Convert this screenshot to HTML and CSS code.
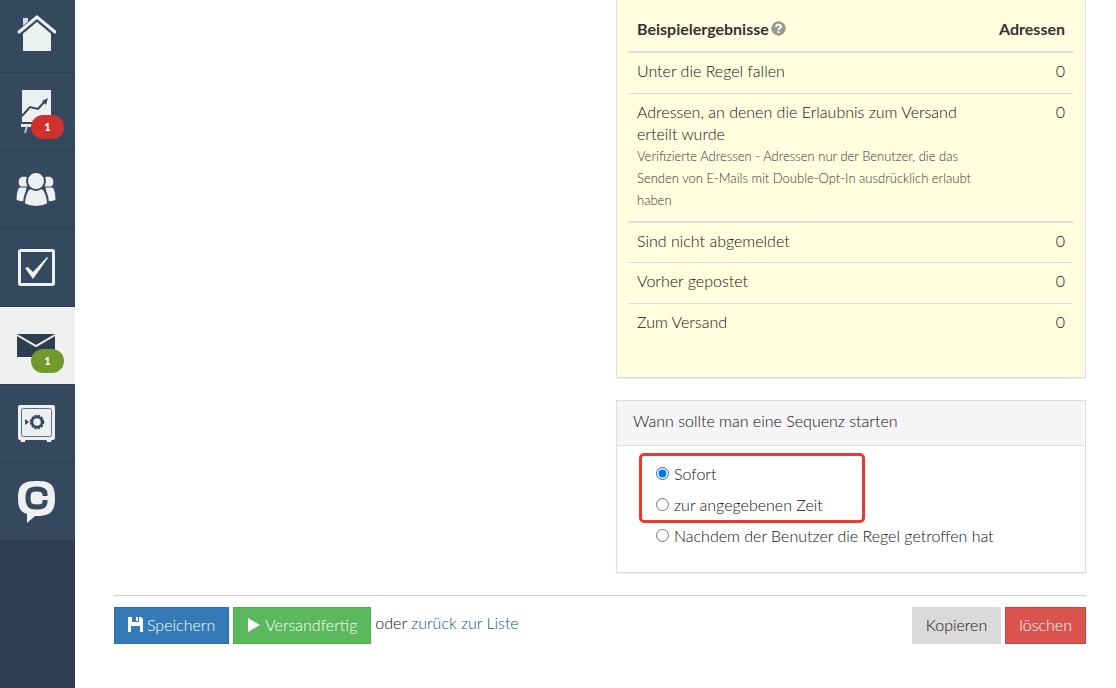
FILE: index.html
```html
<!DOCTYPE html>
<html lang="de">

<head>
    <meta charset="UTF-8">
    <meta name="viewport" content="width=device-width, initial-scale=1.0">
    <title>Sequenz</title>
    <link rel="stylesheet" href="styles.css">
</head>

<body>
    <nav class="sidebar">
        <a href="#" class="nav-item first" aria-label="Start">
            <svg width="40" height="40" viewBox="0 0 40 40">
                <path d="M7 4h5v6l-5 4z" fill="#d3d9dd" />
                <path d="M7 18L21 6l14 12v19H7z" fill="#ecf0f1" />
                <path d="M2 20L21 4l19 16" fill="none" stroke="#34495e" stroke-width="6" />
                <path d="M3 18L21 3l18 15" fill="none" stroke="#ecf0f1" stroke-width="3" stroke-linecap="round" />
            </svg>
        </a>
        <a href="#" class="nav-item" aria-label="Statistik">
            <svg width="40" height="44" viewBox="0 0 40 44">
                <path d="M6 1h29v32H6z" fill="#ecf0f1" />
                <path d="M6 27l8-9 8 2 7-8" fill="none" stroke="#34495e" stroke-width="2" />
                <path d="M26 12l6-3-2 7z" fill="#34495e" />
                <path d="M5 35h30v3H5z" fill="#ecf0f1" />
                <path d="M11 37l-2 7M29 37l2 7" stroke="#b9c2c9" stroke-width="2" />
            </svg>
            <span class="badge red">1</span>
        </a>
        <a href="#" class="nav-item" aria-label="Kontakte">
            <svg width="40" height="40" viewBox="0 0 40 40">
                <g fill="#ecf0f1" stroke="#34495e">
                    <circle cx="8" cy="13" r="6" />
                    <circle cx="32" cy="13" r="6" />
                    <path d="M0 31c0-6 1-10 3-13h8l-2 15c-4 0-7-1-9-2zM40 31c0-6-1-10-3-13h-8l2 15c4 0 7-1 9-2z" />
                    <path d="M8 35c0-8 3-14 6-16h12c3 2 6 8 6 16-7 4-17 4-24 0z" stroke-width="2" />
                    <circle cx="20" cy="12" r="9" stroke-width="2" />
                </g>
            </svg>
        </a>
        <a href="#" class="nav-item" aria-label="Aufgaben">
            <svg width="40" height="40" viewBox="0 0 40 40">
                <rect x="3.5" y="3.5" width="34" height="34" rx="1" fill="none" stroke="#ecf0f1" stroke-width="3" />
                <path d="M9 21l3-1 5 5 14-15 1 1-15 21z" fill="#ecf0f1" />
            </svg>
        </a>
        <a href="#" class="nav-item active" aria-label="Mailings">
            <svg width="40" height="40" viewBox="0 0 40 40">
                <path d="M1 9h38v23H1z" fill="#2c3e50" />
                <path d="M1 10l19 11 19-11" fill="none" stroke="#f0f0f0" stroke-width="2" />
            </svg>
            <span class="badge green">1</span>
        </a>
        <a href="#" class="nav-item" aria-label="Tresor">
            <svg width="40" height="40" viewBox="0 0 40 40">
                <path d="M4 35h6l-1 4H5zM30 35h6l-1 4h-4z" fill="#fff" />
                <rect x="2" y="2" width="37" height="35" rx="2" fill="#ecf0f1" />
                <rect x="5.5" y="5.5" width="30" height="28" rx="2" fill="none" stroke="#5d6f80" />
                <circle cx="21" cy="19" r="5" fill="none" stroke="#34495e" stroke-width="2.5" />
                <circle cx="21" cy="19" r="6.5" fill="none" stroke="#34495e" stroke-width="1.5" stroke-dasharray="2.4 1" />
                <path d="M9 16l4 3-4 3z" fill="#34495e" />
            </svg>
        </a>
        <a href="#" class="nav-item last" aria-label="Chat">
            <svg width="40" height="44" viewBox="0 0 40 44">
                <path d="M21 2c13 0 18 3 18 17S34 37 21 37h-2l-8 7v-9C4 33 2 28 2 19 2 5 8 2 21 2z" fill="#f0f0f0" />
                <path d="M29 17v-2c0-4-3-5-8-5-7 0-9 2-9 9s2 9 9 9c5 0 8-1 8-5v-2" fill="none" stroke="#34495e" stroke-width="5" />
            </svg>
        </a>
    </nav>

    <main class="content">
        <div class="columns">
            <div class="side-col">
                <section class="results">
                    <table>
                        <thead>
                            <tr>
                                <th>Beispielergebnisse
                                    <svg class="help" width="15" height="15" viewBox="0 0 15 15">
                                        <circle cx="7.5" cy="7.5" r="7.2" fill="#999" />
                                        <path d="M5 6c0-3 5-3 5-.3 0 1.6-2.5 1.5-2.5 3.3" fill="none" stroke="#ffffe0" stroke-width="2" />
                                        <path d="M6.5 10h2v2h-2z" fill="#ffffe0" />
                                    </svg>
                                </th>
                                <th class="num">Adressen</th>
                            </tr>
                        </thead>
                        <tbody>
                            <tr class="group">
                                <td>Unter die Regel fallen</td>
                                <td class="num">0</td>
                            </tr>
                            <tr>
                                <td>Adressen, an denen die Erlaubnis zum Versand erteilt wurde
                                    <small>Verifizierte Adressen - Adressen nur der Benutzer, die das Senden von E-Mails mit Double-Opt-In ausdrücklich erlaubt haben</small>
                                </td>
                                <td class="num">0</td>
                            </tr>
                            <tr class="group">
                                <td>Sind nicht abgemeldet</td>
                                <td class="num">0</td>
                            </tr>
                            <tr>
                                <td>Vorher gepostet</td>
                                <td class="num">0</td>
                            </tr>
                            <tr>
                                <td>Zum Versand</td>
                                <td class="num">0</td>
                            </tr>
                        </tbody>
                    </table>
                </section>

                <section class="panel">
                    <h2>Wann sollte man eine Sequenz starten</h2>
                    <div class="panel-body">
                        <div class="highlight"></div>
                        <label><input type="radio" name="start" checked>Sofort</label>
                        <label><input type="radio" name="start">zur angegebenen Zeit</label>
                        <label><input type="radio" name="start">Nachdem der Benutzer die Regel getroffen hat</label>
                    </div>
                </section>
            </div>
        </div>

        <div class="actions">
            <button class="btn save">
                <svg width="15" height="15" viewBox="0 0 15 15">
                    <path d="M0 0h4v5h7V0h2l2 2v13h-3V9H3v6H0zM8 0h2v4H8z" fill="#fff" />
                </svg>
                Speichern
            </button>
            <button class="btn ready">
                <svg width="14" height="14" viewBox="0 0 14 14">
                    <path d="M1 0l12 7-12 7z" fill="#fff" />
                </svg>
                Versandfertig
            </button>
            <span class="back">oder <a href="#">zurück zur Liste</a></span>
            <button class="btn copy">Kopieren</button>
            <button class="btn delete">löschen</button>
        </div>
    </main>
</body>

</html>
```

FILE: styles.css
```css
* {
    box-sizing: border-box;
}

body {
    display: flex;
    min-height: 100vh;
    margin: 0;
    font-family: Lato, "Liberation Sans", sans-serif;
    font-size: 16px;
    font-weight: 300;
    line-height: 22px;
    color: #111;
    background-color: #fff;
}

a {
    color: #0f528c;
    text-decoration: none;
}

/* sidebar */
.sidebar {
    flex: none;
    width: 75px;
    background-color: #2c3e50;
}

.nav-item {
    position: relative;
    display: flex;
    align-items: center;
    justify-content: center;
    height: 78px;
    padding: 0 3px 1px 0;
    background-color: #34495e;
    border-bottom: 1px solid #2c3e50;
}

.nav-item.first {
    height: 73px;
    padding-bottom: 4px;
}

.nav-item.active {
    background-color: #f0f0f0;
}

.badge {
    position: absolute;
    left: 31px;
    top: 42px;
    width: 33px;
    height: 24px;
    border-radius: 12px;
    color: #fff;
    font-size: 11px;
    font-weight: 900;
    line-height: 24px;
    text-align: center;
}

.red {
    background-color: #d0312d;
}

.green {
    background-color: #71992c;
}

/* content */
.content {
    flex: 1;
    padding: 0 30px 44px 39px;
}

.columns {
    display: flex;
    justify-content: flex-end;
    padding-bottom: 22px;
    border-bottom: 1px solid #ccc;
}

.side-col {
    width: 470px;
}

.results {
    padding: 10px 12px 33px 11px;
    margin-bottom: 22px;
    background-color: #ffffe0;
    border: 1px solid #ddd;
    border-top: 0;
    box-shadow: inset -1px 0 #fff, 0 1px 1px #eee;
}

table {
    width: 100%;
    border-spacing: 0;
}

th,
td {
    height: 41px;
    padding: 8px 8px 9px 9px;
    text-align: left;
    vertical-align: top;
}

th {
    color: #333;
}

td {
    padding-top: 7px;
    padding-bottom: 10px;
    border-top: 1px solid #ddd;
}

.group td {
    border-top-width: 2px;
}

tbody tr:first-child td {
    height: 42px;
}

.num {
    width: 84px;
    text-align: right;
}

small {
    display: block;
    font-size: 13px;
    color: #333;
}

.help {
    margin-left: -2px;
    vertical-align: -1px;
}

.panel {
    border: 1px solid #ddd;
    box-shadow: 0 1px 1px #eee;
}

.panel h2 {
    margin: 0 1px 0 0;
    padding: 9px 16px 13px;
    font-size: 16px;
    font-weight: 300;
    background-color: #f5f5f5;
    border-bottom: 1px solid #ddd;
}

.panel-body {
    position: relative;
    padding: 17px 22px 16px 39px;
}

.panel-body label {
    display: flex;
    gap: 5px;
    margin-bottom: 9px;
}

.panel-body input {
    width: 13px;
    height: 13px;
    margin: 4px 0 0;
}

.highlight {
    position: absolute;
    left: 22px;
    top: 7px;
    width: 226px;
    height: 70px;
    border: 3px solid #e63b2e;
    border-radius: 5px;
    pointer-events: none;
}

/* buttons */
.actions {
    display: flex;
    gap: 4px;
    padding-top: 11px;
}

.btn {
    display: flex;
    align-items: center;
    gap: 4px;
    height: 37px;
    padding: 0 13px 2px;
    border: 1px solid;
    font: inherit;
    color: #fff;
    cursor: pointer;
}

.save {
    background-color: #337ab7;
    border-color: #2e6da4;
}

.ready {
    background-color: #5cb85c;
    border-color: #4cae4c;
}

.back {
    flex: 1;
    padding-top: 5px;
}

.copy {
    color: #111;
    background-color: #dadada;
    border-color: #dadada;
}

.delete {
    background-color: #d9534f;
    border-color: #d43f3a;
}
```
